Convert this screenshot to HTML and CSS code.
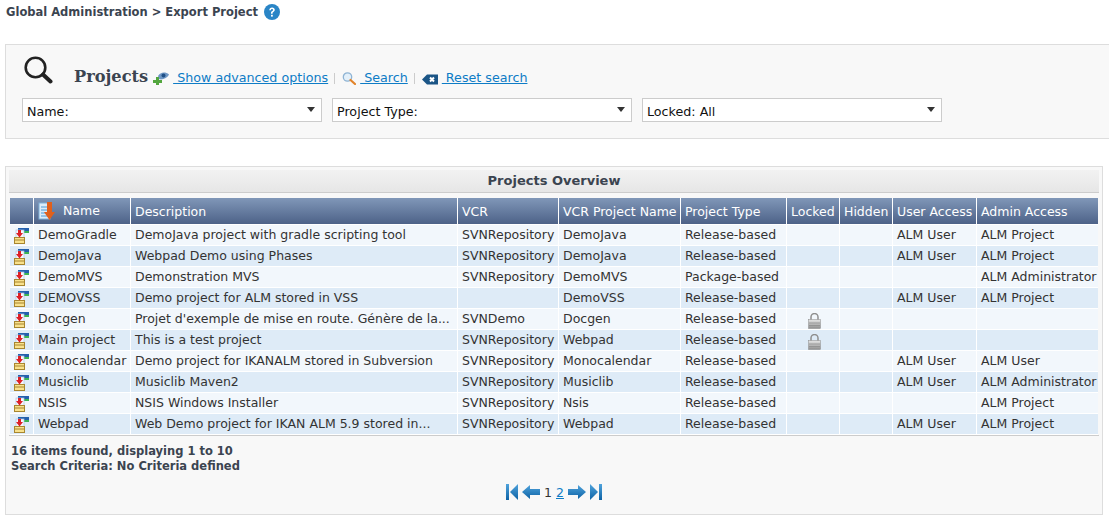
FILE: index.html
```html
<!DOCTYPE html>
<html lang="en">
<head>
  <meta charset="UTF-8">
  <title>Export Project</title>
  <link rel="stylesheet" href="styles.css">
</head>
<body>
  <svg class="sprites" width="0" height="0">
    <defs>
      <linearGradient id="blue" x1="0" y1="0" x2="0" y2="1">
        <stop offset="0" stop-color="#4fa3dc"/>
        <stop offset="1" stop-color="#0d62a5"/>
      </linearGradient>
      <linearGradient id="steel" x1="0" y1="0" x2="0" y2="1">
        <stop offset="0" stop-color="#e6e6e6"/>
        <stop offset="1" stop-color="#8e8e8e"/>
      </linearGradient>
      <symbol id="export" viewBox="0 0 15 16">
        <rect x="4" y="0" width="11" height="3" fill="#2460ad"/>
        <rect x="9" y="3" width="6" height="2" fill="#3cb551"/>
        <rect x="2" y="2" width="8" height="8" fill="#f4f8fd" stroke="#a9c3e2" stroke-width=".7"/>
        <rect x=".5" y="9.500" width="10" height="6" fill="#f8e18c" stroke="#a8862f"/>
        <rect x="1" y="11.500" width="9" height="1" fill="#a8862f"/>
        <path d="M4 2h3v3h2l-3.500 4.500L2 5h2z" fill="#dd2027"/>
      </symbol>
      <symbol id="lock" viewBox="0 0 13 16">
        <path d="M3 7V4a3.500 3.500 0 0 1 7 0v3" fill="none" stroke="#8f8f8f" stroke-width="1.500"/>
        <rect x=".5" y="6.500" width="12" height="9" fill="url(#steel)" stroke="#8a8a8a" stroke-width=".5"/>
        <path d="M1 10h11M1 12.500h11" stroke="#8a8a8a" stroke-width=".7"/>
      </symbol>
    </defs>
  </svg>

  <h1 class="crumb">Global Administration &gt; Export Project
    <svg class="help" viewBox="0 0 16 16" width="16" height="16">
      <circle cx="8" cy="8" r="8" fill="#2a85c6"/>
      <path d="M5.300 6.200c0-1.700 1.200-2.700 2.800-2.700s2.700 1 2.700 2.300c0 1.100-.6 1.700-1.400 2.200-.6.400-.8.700-.8 1.300v.4H7v-.6c0-1 .4-1.500 1.100-2 .6-.4.900-.7.900-1.200 0-.5-.4-.9-1-.9-.7 0-1 .5-1.100 1.200z" fill="#fff"/>
      <rect x="7" y="10.800" width="1.800" height="1.800" fill="#fff"/>
    </svg>
  </h1>

  <section class="panel search-panel">
    <div class="search-head">
      <svg class="big-glass" viewBox="0 0 29 28" width="29" height="28">
        <circle cx="11.500" cy="11.500" r="9.800" fill="none" stroke="#222" stroke-width="2.600"/>
        <path d="M19 18.500l7.500 7" stroke="#222" stroke-width="4" stroke-linecap="round"/>
      </svg>
      <h2>Projects</h2>
      <svg class="tool-icon" viewBox="0 0 16 14" width="16" height="14">
        <path d="M5 5c2-3.500 7-5 11-1.500C14.500 7 9 9.500 6 8z" fill="#6f97c4"/>
        <circle cx="10.500" cy="4.500" r="2" fill="#1f4f86"/>
        <path d="M3 6h3v3h3v3H6v2H3v-2H0V9h3z" fill="#53a63e"/>
      </svg>
      <a href="#" class="tool-link">&nbsp;Show advanced options</a>
      <span class="sep"></span>
      <svg class="tool-icon" viewBox="0 0 14 13" width="14" height="13">
        <circle cx="5.500" cy="5" r="4.200" fill="#e3f0fa" stroke="#8fb4d4" stroke-width="1.300"/>
        <path d="M8.500 8l4.500 4" stroke="#e2842a" stroke-width="2.200" stroke-linecap="round"/>
      </svg>
      <a href="#" class="tool-link">&nbsp;Search</a>
      <span class="sep"></span>
      <svg class="tool-icon" viewBox="0 0 16 11" width="16" height="11">
        <path d="M5 .5h11v10H5L0 5.500z" fill="#1b5586"/>
        <path d="M8 3.500l4 4m0-4l-4 4" stroke="#fff" stroke-width="2"/>
      </svg>
      <a href="#" class="tool-link">&nbsp;Reset search</a>
    </div>
    <div class="filters">
      <div class="select">Name:</div>
      <div class="select">Project Type:</div>
      <div class="select">Locked: All</div>
    </div>
  </section>

  <section class="panel overview-panel">
    <div class="caption">Projects Overview</div>
    <table class="projects">
      <colgroup>
        <col class="c-icon"><col class="c-name"><col class="c-desc"><col class="c-vcr"><col class="c-vname">
        <col class="c-type"><col class="c-locked"><col class="c-hidden"><col class="c-user"><col class="c-admin">
      </colgroup>
      <thead>
        <tr>
          <th></th>
          <th class="sorted">
            <svg class="sort-icon" viewBox="0 0 18 18" width="18" height="18">
              <rect x="1" y="1" width="11" height="16" fill="#dcecf8" stroke="#7fb0d8"/>
              <path d="M3 5h7M3 8h7M3 11h7M3 14h7" stroke="#4b9ad8"/>
              <path d="M9 0h5v10h3l-5.500 8L6 10h3z" fill="#e0601c"/>
            </svg>
            Name
          </th>
          <th>Description</th><th>VCR</th><th>VCR Project Name</th><th>Project Type</th>
          <th>Locked</th><th>Hidden</th><th>User Access</th><th>Admin Access</th>
        </tr>
      </thead>
      <tbody>
        <tr><td class="ico"><svg width="15" height="16"><use href="#export"/></svg></td><td>DemoGradle</td><td>DemoJava project with gradle scripting tool</td><td>SVNRepository</td><td>DemoJava</td><td>Release-based</td><td></td><td></td><td>ALM User</td><td>ALM Project</td></tr>
        <tr><td class="ico"><svg width="15" height="16"><use href="#export"/></svg></td><td>DemoJava</td><td>Webpad Demo using Phases</td><td>SVNRepository</td><td>DemoJava</td><td>Release-based</td><td></td><td></td><td>ALM User</td><td>ALM Project</td></tr>
        <tr><td class="ico"><svg width="15" height="16"><use href="#export"/></svg></td><td>DemoMVS</td><td>Demonstration MVS</td><td>SVNRepository</td><td>DemoMVS</td><td>Package-based</td><td></td><td></td><td></td><td>ALM Administrator</td></tr>
        <tr><td class="ico"><svg width="15" height="16"><use href="#export"/></svg></td><td>DEMOVSS</td><td>Demo project for ALM stored in VSS</td><td></td><td>DemoVSS</td><td>Release-based</td><td></td><td></td><td>ALM User</td><td>ALM Project</td></tr>
        <tr><td class="ico"><svg width="15" height="16"><use href="#export"/></svg></td><td>Docgen</td><td>Projet d'exemple de mise en route. Génère de la...</td><td>SVNDemo</td><td>Docgen</td><td>Release-based</td><td class="lock"><svg width="13" height="16"><use href="#lock"/></svg></td><td></td><td></td><td></td></tr>
        <tr><td class="ico"><svg width="15" height="16"><use href="#export"/></svg></td><td>Main project</td><td>This is a test project</td><td>SVNRepository</td><td>Webpad</td><td>Release-based</td><td class="lock"><svg width="13" height="16"><use href="#lock"/></svg></td><td></td><td></td><td></td></tr>
        <tr><td class="ico"><svg width="15" height="16"><use href="#export"/></svg></td><td>Monocalendar</td><td>Demo project for IKANALM stored in Subversion</td><td>SVNRepository</td><td>Monocalendar</td><td>Release-based</td><td></td><td></td><td>ALM User</td><td>ALM User</td></tr>
        <tr><td class="ico"><svg width="15" height="16"><use href="#export"/></svg></td><td>Musiclib</td><td>Musiclib Maven2</td><td>SVNRepository</td><td>Musiclib</td><td>Release-based</td><td></td><td></td><td>ALM User</td><td>ALM Administrator</td></tr>
        <tr><td class="ico"><svg width="15" height="16"><use href="#export"/></svg></td><td>NSIS</td><td>NSIS Windows Installer</td><td>SVNRepository</td><td>Nsis</td><td>Release-based</td><td></td><td></td><td></td><td>ALM Project</td></tr>
        <tr><td class="ico"><svg width="15" height="16"><use href="#export"/></svg></td><td>Webpad</td><td>Web Demo project for IKAN ALM 5.9 stored in...</td><td>SVNRepository</td><td>Webpad</td><td>Release-based</td><td></td><td></td><td>ALM User</td><td>ALM Project</td></tr>
      </tbody>
    </table>
    <p class="summary">16 items found, displaying 1 to 10<br>Search Criteria: No Criteria defined</p>
    <div class="pager">
      <svg viewBox="0 0 12 18" width="12" height="18"><path d="M0 1h3v16H0zM12 1v16L4 9z" fill="url(#blue)"/></svg>
      <svg viewBox="0 0 18 18" width="18" height="18"><path d="M0 9l8-7v4h10v6H8v4z" fill="url(#blue)"/></svg>
      <span>1</span>
      <a href="#">2</a>
      <svg viewBox="0 0 18 18" width="18" height="18"><path d="M18 9l-8-7v4H0v6h10v4z" fill="url(#blue)"/></svg>
      <svg viewBox="0 0 12 18" width="12" height="18"><path d="M12 1H9v16h3zM0 1v16l8-8z" fill="url(#blue)"/></svg>
    </div>
  </section>
</body>
</html>
```

FILE: styles.css
```css
/* Global layout */
body {
  font-family: "DejaVu Sans", Verdana, sans-serif;
  font-size: 12.5px;
  color: #333;
  background-color: #fff;
  margin: 0;
  padding: 0 0 0 5px;
}

.sprites {
  position: absolute;
}

a {
  color: #0e7cc6;
}

.crumb {
  display: flex;
  align-items: center;
  gap: 6px;
  height: 24px;
  margin: 0 0 20px 1px;
  font-size: 11.5px;
  font-weight: bold;
  color: #3b4450;
}

.panel {
  box-sizing: border-box;
  background-color: #f8f8f8;
  border: 1px solid #ddd;
}

/* Search panel */
.search-panel {
  height: 95px;
  padding: 9px 16px 0;
  margin-bottom: 27px;
  border-right: none;
}

.search-head {
  display: flex;
  align-items: flex-end;
  height: 35px;
  margin-bottom: 9px;
}

.big-glass {
  margin: 0 21px 5px 2px;
}

.search-head h2 {
  margin: 0 5px 0 0;
  font-family: "DejaVu Serif", serif;
  font-size: 16.2px;
  line-height: 24px;
  color: #3b4450;
}

.tool-icon {
  margin: 0 4px 4px 0;
}

.tool-link {
  font-size: 12.7px;
  line-height: 21px;
  margin-bottom: 1px;
}

.sep {
  width: 1px;
  height: 11px;
  margin: 0 7px 5px 6px;
  background-color: #ccc;
}

.filters {
  display: flex;
  gap: 10px;
}

.select {
  position: relative;
  box-sizing: border-box;
  width: 300px;
  height: 24px;
  padding: 2px 4px 0;
  font-size: 12.7px;
  line-height: 22px;
  color: #111;
  background-color: #fff;
  border: 1px solid #ccc;
}

.select::after {
  content: "";
  position: absolute;
  top: 8px;
  right: 6px;
  border: 4px solid transparent;
  border-top: 5px solid #333;
}

/* Overview panel */
.overview-panel {
  width: 1098px;
  height: 349px;
  padding: 3px 3px 0;
}

.caption {
  height: 22px;
  line-height: 21px;
  text-align: center;
  font-size: 13px;
  font-weight: bold;
  color: #3b4450;
  background: linear-gradient(#f2f2f2, #e6e6e6);
  border-bottom: 1px solid #ccc;
  margin-bottom: 5px;
}

.projects {
  table-layout: fixed;
  border-collapse: separate;
  border-spacing: 0;
  width: 1088px;
  margin-left: 1px;
}

.c-icon { width: 23px; }
.c-name { width: 97px; }
.c-desc { width: 327px; }
.c-vcr { width: 101px; }
.c-vname { width: 122px; }
.c-type { width: 106px; }
.c-locked { width: 53px; }
.c-hidden { width: 53px; }
.c-user { width: 84px; }
.c-admin { width: 122px; }

.projects th {
  box-sizing: border-box;
  height: 27px;
  padding: 0 3px 0 4px;
  font-weight: normal;
  text-align: left;
  white-space: nowrap;
  color: #fff;
  background: linear-gradient(#8097b8, #4d6288);
  background-clip: padding-box;
  border-left: 1px solid #fff;
  border-bottom: 1px solid #fff;
}

.projects th:first-child,
.projects td:first-child {
  border-left: none;
}

.projects th.sorted {
  padding-left: 4px;
}

.sort-icon {
  vertical-align: -5px;
  margin-right: 3px;
}

.projects td {
  box-sizing: border-box;
  height: 21px;
  padding: 0 0 2px 4px;
  white-space: nowrap;
  overflow: hidden;
  color: #333;
  background-color: #f2f7fc;
  border-left: 1px solid #fff;
  border-bottom: 1px solid #fff;
}

.projects tbody tr:nth-child(even) td {
  background-color: #deebf7;
}

.projects td.ico {
  padding: 2px 0 0 4px;
}

.projects td.lock {
  padding: 3px 0 0 21px;
}

.projects td svg {
  display: block;
}

.summary {
  margin: 0;
  padding: 8px 2px 0;
  border-top: 1px solid #ccc;
  font-size: 11.5px;
  font-weight: bold;
  line-height: 15px;
  color: #3b4450;
}

.pager {
  display: flex;
  justify-content: center;
  align-items: center;
  gap: 4px;
  margin-top: 9px;
}
```
